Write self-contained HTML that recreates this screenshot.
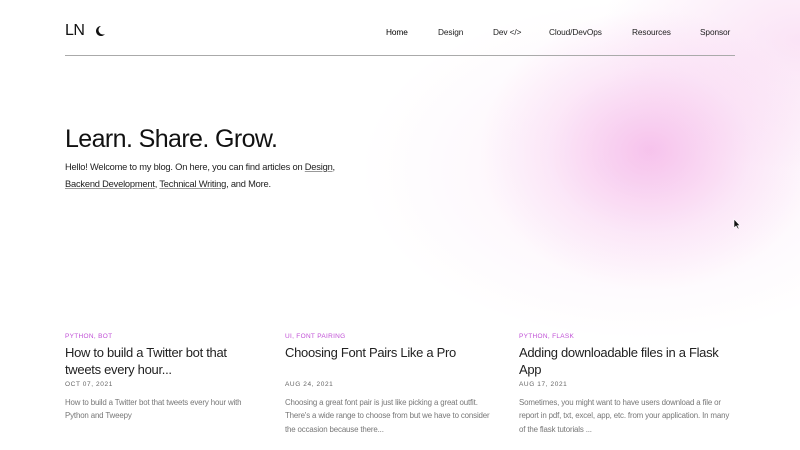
<!DOCTYPE html>
<html><head><meta charset="utf-8"><style>
*{margin:0;padding:0;box-sizing:border-box}
body{width:800px;height:450px;overflow:hidden;background:#fff;font-family:"Liberation Sans",sans-serif;position:relative;color:#111}
.blob{position:absolute;left:0;top:0;width:800px;height:450px;background:
radial-gradient(ellipse 170px 140px at 650px 150px,rgba(244,175,230,.7),rgba(248,205,240,.35) 60%,rgba(255,255,255,0) 100%),
radial-gradient(ellipse 200px 130px at 800px 40px,rgba(245,195,235,.45),rgba(255,255,255,0) 100%),
radial-gradient(ellipse 280px 170px at 640px 170px,rgba(250,228,246,.55),rgba(255,255,255,0) 100%)}
.a{position:absolute;white-space:nowrap}
.nav{font-size:8.3px;top:27px;letter-spacing:-.1px;color:#222}
.line{position:absolute;left:65px;top:55px;width:670px;height:1px;background:#aaa}
h1{position:absolute;left:65px;top:125px;font-size:25px;font-weight:400;letter-spacing:-.6px;white-space:nowrap;color:#111}
.p{font-size:9.3px;color:#222;letter-spacing:-.2px}
.p u{text-decoration-color:#999}
.tag{font-size:6.5px;color:#c04fd6;letter-spacing:.3px;top:333px}
.t{font-size:13px;line-height:17px;color:#222;letter-spacing:-.3px;top:344px;width:190px;white-space:normal}
.d{font-size:6.5px;color:#666;letter-spacing:.6px;top:381px}
.x{font-size:7.9px;line-height:13.3px;color:#777;top:396px;width:215px;white-space:normal;letter-spacing:-.15px}
</style></head><body>
<div class="blob"></div>
<div class="a" style="left:65px;top:22px;font-size:16px;letter-spacing:-.5px">LN</div>
<svg class="a" style="left:94px;top:25px" width="12" height="12" viewBox="0 0 12 12"><path d="M7 1A5 5 0 1 0 11 9A4.3 4.3 0 0 1 7 1Z" fill="#111"/></svg>
<div class="a nav" style="left:386px;color:#000">Home</div>
<div class="a nav" style="left:438px">Design</div>
<div class="a nav" style="left:493px">Dev &lt;/&gt;</div>
<div class="a nav" style="left:549px">Cloud/DevOps</div>
<div class="a nav" style="left:632px">Resources</div>
<div class="a nav" style="left:700px">Sponsor</div>
<div class="line"></div>
<h1>Learn. Share. Grow.</h1>
<div class="a p" style="left:65px;top:162px">Hello! Welcome to my blog. On here, you can find articles on <u>Design</u>,</div>
<div class="a p" style="left:65px;top:179px"><u>Backend Development</u>, <u>Technical Writing</u>, and More.</div>
<svg class="a" style="left:733px;top:218px" width="8" height="12" viewBox="0 0 8 12"><path d="M1 1V10L3 8L5 11L6 10.5L4.5 7.5H7Z" fill="#111" stroke="#fff" stroke-width=".6"/></svg>

<div class="a tag" style="left:65px">PYTHON, BOT</div>
<div class="a t" style="left:65px">How to build a Twitter bot that tweets every hour...</div>
<div class="a d" style="left:65px">OCT 07, 2021</div>
<div class="a x" style="left:65px;width:200px">How to build a Twitter bot that tweets every hour with Python and Tweepy</div>

<div class="a tag" style="left:285px">UI, FONT PAIRING</div>
<div class="a t" style="left:285px">Choosing Font Pairs Like a Pro</div>
<div class="a d" style="left:285px">AUG 24, 2021</div>
<div class="a x" style="left:285px;width:215px">Choosing a great font pair is just like picking a great outfit. There's a wide range to choose from but we have to consider the occasion because there...</div>

<div class="a tag" style="left:519px">PYTHON, FLASK</div>
<div class="a t" style="left:519px;width:210px">Adding downloadable files in a Flask App</div>
<div class="a d" style="left:519px">AUG 17, 2021</div>
<div class="a x" style="left:519px;width:212px">Sometimes, you might want to have users download a file or report in pdf, txt, excel, app, etc. from your application. In many of the flask tutorials ...</div>
</body></html>
